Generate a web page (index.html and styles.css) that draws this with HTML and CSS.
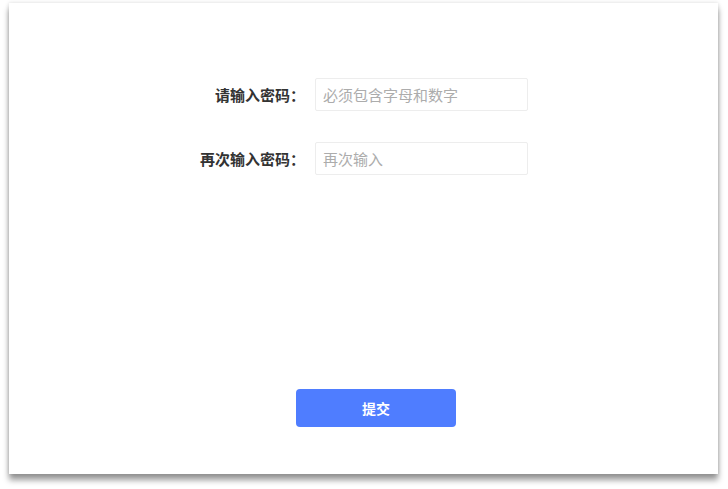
FILE: index.html
```html
<!DOCTYPE html>
<html lang="zh-CN">
<head>
    <meta charset="UTF-8">
    <meta name="viewport" content="width=device-width, initial-scale=1.0">
    <title>设置密码</title>
    <link rel="stylesheet" href="styles.css">
</head>
<body>
    <div class="pwd-card">
        <div class="pwd-form">
            <div class="pwd-row">
                <label class="pwd-label" for="pwd">请输入密码：</label>
                <input class="pwd-input" type="password" id="pwd" placeholder="必须包含字母和数字">
            </div>
            <div class="pwd-row">
                <label class="pwd-label" for="pwdAgain">再次输入密码：</label>
                <input class="pwd-input" type="password" id="pwdAgain" placeholder="再次输入">
            </div>
        </div>
        <div class="pwd-footer">
            <button class="pwd-submit" id="submitBtn">提交</button>
        </div>
    </div>
</body>
</html>
```

FILE: styles.css
```css
/* Password form */
html, body {
    margin: 0;
    background-color: #fff;
}

body {
    padding: 3px 10px 15px 9px;
    font-family: "Noto Sans CJK SC", "Noto Sans", sans-serif;
}

.pwd-card {
    height: 471px;
    box-sizing: border-box;
    background-color: #fff;
    box-shadow: 0 6px 6px rgba(0,0,0,0.4), 0 0 4px rgba(0,0,0,0.15);
    display: flex;
    flex-direction: column;
    padding: 75px 0 47px 0;
}

.pwd-form {
    display: flex;
    flex-direction: column;
    gap: 31px;
}

.pwd-row {
    display: flex;
    align-items: center;
}

.pwd-label {
    width: 306px;
    box-sizing: border-box;
    padding-right: 10px;
    text-align: right;
    font-size: 15px;
    font-weight: bold;
    color: #333;
}

.pwd-input {
    width: 213px;
    height: 33px;
    box-sizing: border-box;
    margin: 0;
    padding: 0 7px;
    border: 1px solid #ededed;
    border-radius: 2px;
    font-family: inherit;
    font-size: 15px;
    color: #333;
    outline: none;
}

.pwd-input::placeholder {
    color: #acacac;
}

.pwd-footer {
    margin-top: auto;
    padding-left: 287px;
}

.pwd-submit {
    width: 160px;
    height: 38px;
    border: none;
    border-radius: 4px;
    background-color: #4f7dff;
    color: #fff;
    font-family: inherit;
    font-size: 14px;
    font-weight: bold;
    cursor: pointer;
}
```
